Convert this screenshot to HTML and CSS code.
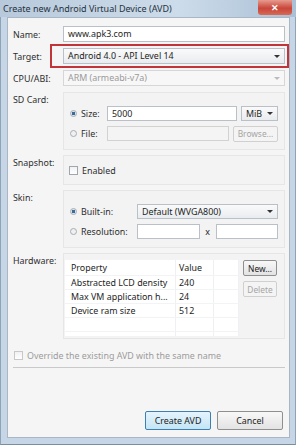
FILE: index.html
```html
<!DOCTYPE html>
<html lang="en">
  <head>
    <meta charset="UTF-8" />
    <title>Create new Android Virtual Device (AVD)</title>
    <link rel="stylesheet" href="styles.css">
  </head>
  <body>
    <div class="window">
      <div class="titlebar">
        <span class="title">Create new Android Virtual Device (AVD)</span>
        <span class="close">&#10005;</span>
      </div>
      <div class="frame">
        <div class="client">
          <div class="row">
            <label>Name:</label>
            <div class="field text">www.apk3.com</div>
          </div>
          <div class="row target">
            <label>Target:</label>
            <div class="field select">Android 4.0 - API Level 14<span class="arrow"></span></div>
          </div>
          <div class="row">
            <label>CPU/ABI:</label>
            <div class="field select disabled">ARM (armeabi-v7a)<span class="arrow"></span></div>
          </div>

          <!-- SD CARD -->
          <div class="row group-row">
            <label>SD Card:</label>
            <div class="group sd">
              <div class="line">
                <span class="radio on"></span><span class="opt w-size">Size:</span>
                <div class="field text grow">5000</div>
                <div class="field select small">MiB<span class="arrow"></span></div>
              </div>
              <div class="line">
                <span class="radio"></span><span class="opt w-size">File:</span>
                <div class="field text grow off"></div>
                <button class="btn off">Browse...</button>
              </div>
            </div>
          </div>

          <!-- SNAPSHOT -->
          <div class="row group-row">
            <label>Snapshot:</label>
            <div class="group snap">
              <div class="line">
                <span class="check"></span><span class="opt">Enabled</span>
              </div>
            </div>
          </div>

          <!-- SKIN -->
          <div class="row group-row">
            <label>Skin:</label>
            <div class="group skin">
              <div class="line">
                <span class="radio on"></span><span class="opt w-skin">Built-in:</span>
                <div class="field select grow">Default (WVGA800)<span class="arrow"></span></div>
              </div>
              <div class="line">
                <span class="radio"></span><span class="opt w-skin">Resolution:</span>
                <div class="field text grow"></div>
                <span class="times">x</span>
                <div class="field text grow"></div>
              </div>
            </div>
          </div>

          <!-- HARDWARE -->
          <div class="row group-row">
            <label>Hardware:</label>
            <div class="group hw">
              <table class="props">
                <tr><th>Property</th><th>Value</th><th></th></tr>
                <tr><td>Abstracted LCD density</td><td>240</td><td></td></tr>
                <tr><td>Max VM application h...</td><td>24</td><td></td></tr>
                <tr><td>Device ram size</td><td>512</td><td></td></tr>
                <tr><td></td><td></td><td></td></tr>
                <tr class="cut"><td></td><td></td><td></td></tr>
              </table>
              <div class="side">
                <button class="btn">New...</button>
                <button class="btn off">Delete</button>
              </div>
            </div>
          </div>

          <div class="override">
            <span class="check off"></span><span>Override the existing AVD with the same name</span>
          </div>
          <div class="sep"></div>

          <div class="actions">
            <button class="btn big default">Create AVD</button>
            <button class="btn big">Cancel</button>
          </div>
        </div>
      </div>
    </div>
  </body>
</html>
```

FILE: styles.css
```css
* {
  margin: 0;
  padding: 0;
  box-sizing: border-box;
  font-family: "Noto Sans", "Open Sans", sans-serif;
}
body {
  width: 296px;
  height: 445px;
  background: #fff;
  overflow: hidden;
}

/* WINDOW */
.window {
  width: 296px;
  height: 445px;
  display: flex;
  flex-direction: column;
  background: #c6d6e6;
}
.titlebar {
  height: 17px;
  display: flex;
  justify-content: space-between;
  align-items: flex-start;
  background: linear-gradient(90deg, #b7c9db, #cddcea 60%, #aac0d6);
}
.title {
  font-size: 9px;
  color: #26323e;
  padding: 2px 0 0 3px;
  line-height: 13px;
  white-space: nowrap;
}
.close {
  width: 34px;
  height: 15px;
  margin-right: 4px;
  background: linear-gradient(#e79a8e, #c9463a 55%, #d86a55);
  color: #fff;
  font-size: 9px;
  font-weight: bold;
  text-align: center;
  line-height: 15px;
  border-radius: 0 0 3px 3px;
}
.frame {
  flex: 1;
  min-height: 0;
  display: flex;
  padding: 0 5px 6px 6px;
  border-left: 1px solid #8fa3b6;
  border-right: 1px solid #8fa3b6;
  border-bottom: 1px solid #7a8ea2;
}
.client {
  flex: 1;
  min-width: 0;
  background: #f5f5f5;
  border: 1px solid #a9b7c4;
  padding: 8px 4px 7px 5px;
  display: flex;
  flex-direction: column;
  font-size: 8.9px;
  color: #1e1e1e;
}

/* ROWS */
.row {
  display: flex;
  align-items: center;
  margin-bottom: 6px;
  position: relative;
}
.row label {
  width: 50px;
  flex: none;
  color: #2e2e2e;
}
.group-row {
  align-items: flex-start;
  margin-bottom: 5px;
}
.group-row label {
  padding-top: 1px;
}
.target::after {
  content: "";
  position: absolute;
  left: 37px;
  right: -4px;
  top: -4px;
  bottom: -4px;
  border: 2px solid #c0343a;
}

/* FIELDS */
.field {
  height: 16px;
  flex: 1;
  min-width: 0;
  background: #fff;
  border: 1px solid #b9c0c8;
  padding: 0 4px;
  line-height: 14px;
  display: flex;
  align-items: center;
  white-space: nowrap;
}
.select {
  background: linear-gradient(#fafafa, #e9ecef);
  justify-content: space-between;
}
.select .arrow {
  width: 0;
  height: 0;
  border-left: 3px solid transparent;
  border-right: 3px solid transparent;
  border-top: 3px solid #333;
}
.select.disabled {
  background: #f7f7f7;
  color: #9a9a9a;
  border-color: #d6d6d6;
}
.select.disabled .arrow {
  border-top-color: #bbb;
}
.field.off {
  background: #f4f4f4;
  border-color: #d2d2d2;
}

/* GROUPS */
.group {
  flex: 1;
  min-width: 0;
  border: 1px solid #e6e6e6;
  background: #f3f3f3;
  padding: 13px 6px 8px 6px;
  display: flex;
  flex-direction: column;
  gap: 5px;
}
.line {
  display: flex;
  align-items: center;
  gap: 4px;
  height: 15px;
}
.line .field {
  height: 15px;
}
.grow {
  flex: 1;
}
.small {
  flex: none;
  width: 37px;
}
.opt {
  color: #2e2e2e;
}
.w-size {
  width: 22px;
}
.w-skin {
  width: 52px;
}
.times {
  width: 8px;
  text-align: center;
}
.radio {
  width: 7px;
  height: 7px;
  border-radius: 50%;
  border: 1px solid #a5adb5;
  background: #f0f0f0;
  flex: none;
}
.radio.on {
  background: radial-gradient(circle, #3b6a96 0 1.6px, #dbe4ec 2px);
}
.check {
  width: 9px;
  height: 9px;
  border: 1px solid #9fa7ae;
  background: linear-gradient(#f1f1f1, #fff);
  flex: none;
}
.check.off {
  border-color: #c8c8c8;
}

.snap {
  padding: 7px 6px 6px 5px;
}
.sd .btn {
  width: 45px;
  flex: none;
}

/* HARDWARE */
.hw {
  flex-direction: row;
  padding: 6px 7px 2px 1px;
  gap: 4px;
  align-items: flex-start;
}
.props {
  flex: 1;
  min-width: 0;
  table-layout: fixed;
  border-collapse: collapse;
  background: #fff;
  font-size: 8.9px;
}
.props th,
.props td {
  height: 14px;
  line-height: 13px;
  text-align: left;
  font-weight: normal;
  padding: 0 0 0 6px;
  border-right: 1px solid #eef0f2;
  border-bottom: 1px solid #f2f3f4;
  white-space: nowrap;
  overflow: hidden;
}
.props th {
  height: 15px;
}
.props tr.cut td {
  height: 5px;
  border-bottom: none;
}
.props th:nth-child(2),
.props td:nth-child(2) {
  padding-left: 3px;
  width: 38px;
}
.props th:nth-child(3),
.props td:nth-child(3) {
  width: 25px;
}
.side {
  display: flex;
  flex-direction: column;
  gap: 5px;
  width: 34px;
  flex: none;
}

/* BUTTONS */
.btn {
  height: 16px;
  font-size: 8.4px;
  color: #222;
  background: linear-gradient(#f8f8f8, #e3e3e3);
  border: 1px solid #8e8f8f;
  border-radius: 2px;
}
.btn.off {
  color: #a5a5a5;
  border-color: #d0d0d0;
  background: #f4f4f4;
}
.override {
  display: flex;
  align-items: center;
  gap: 4px;
  margin-top: 5px;
  color: #9c9c9c;
  padding-left: 1px;
}
.sep {
  height: 1px;
  background: #c9c9c9;
  margin: 5px 0 0 0;
}
.actions {
  margin-top: auto;
  display: flex;
  justify-content: flex-end;
  gap: 6px;
  padding-right: 2px;
}
.btn.big {
  width: 66px;
  height: 19px;
  flex: none;
  font-size: 8.9px;
}
.btn.default {
  border-color: #3c7fb1;
  background: linear-gradient(#e5f4fc, #c4e5f6);
}
```
